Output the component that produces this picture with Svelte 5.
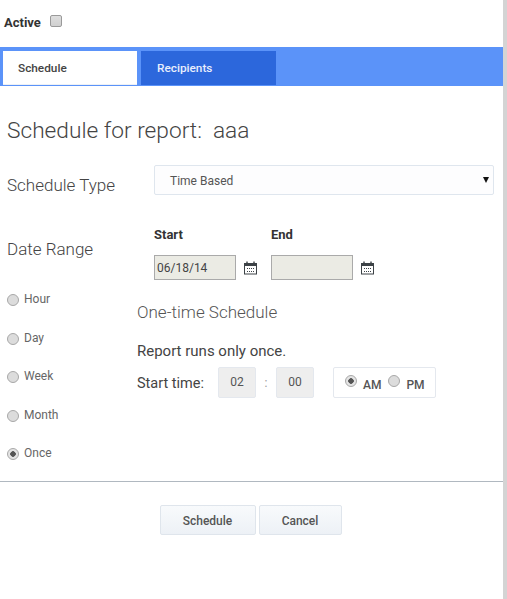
<script>
  let type = $state("Time Based");
  let period = $state("Once");
  let ampm = $state("AM");
  const periods = ["Hour", "Day", "Week", "Month", "Once"];
</script>

<div class="page">
  <div class="active_row">
    <label for="active">Active</label>
    <input id="active" type="checkbox" />
  </div>

  <div class="tabs">
    <div class="tab selected">Schedule</div>
    <div class="tab">Recipients</div>
  </div>

  <h1>Schedule for report:&nbsp; aaa</h1>

  <div class="type_row">
    <span class="field_label">Schedule Type</span>
    <div class="select">
      <span>{type}</span>
      <i class="caret"></i>
    </div>
  </div>

  <div class="date_row">
    <span class="field_label">Date Range</span>
    <div class="dates">
      {#each [["Start", "06/18/14"], ["End", ""]] as [name, value]}
        <div class="date">
          <b>{name}</b>
          <div class="date_input">
            <input type="text" {value} disabled />
            <svg width="15" height="15" viewBox="0 0 15 15">
              <rect x="1.5" y="3.5" width="12" height="10.5" fill="#fff" stroke="#3d4347" />
              <rect x="1" y="3" width="13" height="3" fill="#3d4347" />
              <path d="M4 1.5v2M11 1.5v2" stroke="#3d4347" stroke-width="1.4" />
              <path d="M4 8.5h7M4 11.5h7" stroke="#3d4347" stroke-dasharray="1 1" />
            </svg>
          </div>
        </div>
      {/each}
    </div>
  </div>

  <div class="schedule">
    <div class="periods">
      {#each periods as p}
        <label class="period">
          <input type="radio" name="period" value={p} bind:group={period} />
          <span>{p}</span>
        </label>
      {/each}
    </div>
    <div class="once">
      <h2>One-time Schedule</h2>
      <p>Report runs only once.</p>
      <div class="time_row">
        <span class="start_time">Start time:</span>
        <div class="num">02</div>
        <span class="colon">:</span>
        <div class="num">00</div>
        <div class="ampm">
          <label><input type="radio" name="ampm" value="AM" bind:group={ampm} /><b>AM</b></label>
          <label><input type="radio" name="ampm" value="PM" bind:group={ampm} /><b>PM</b></label>
        </div>
      </div>
    </div>
  </div>

  <div class="actions">
    <button class="wide">Schedule</button>
    <button>Cancel</button>
  </div>
</div>

<style>
  :global(body) {
    background: #fff;
  }

  .page {
    box-sizing: border-box;
    width: 507px;
    height: 599px;
    border-right: 4px solid #d4d4d4;
    font-family: Roboto, "Liberation Sans", sans-serif;
    color: #333;
    overflow: hidden;
  }

  .active_row {
    display: flex;
    align-items: flex-start;
    height: 47px;
    padding-left: 4px;
    box-sizing: border-box;
    padding-top: 15px;
  }

  .active_row label {
    font-size: 13px;
    font-weight: 700;
    line-height: 16px;
  }

  input[type="checkbox"] {
    appearance: none;
    box-sizing: border-box;
    width: 12px;
    height: 12px;
    margin: 0 0 0 9px;
    border: 1px solid #9a9a9a;
    border-radius: 2px;
    background: linear-gradient(#dedede, #d0d0d0);
  }

  .tabs {
    display: flex;
    gap: 4px;
    height: 39px;
    box-sizing: border-box;
    padding: 4px 0 1px 3px;
    background: #5b93f9;
  }

  .tab {
    box-sizing: border-box;
    width: 135px;
    padding-left: 16px;
    font-size: 11.8px;
    font-weight: 500;
    line-height: 35px;
    color: #e8eefc;
    background: #2c67dc;
  }

  .tab.selected {
    width: 134px;
    padding-left: 15px;
    color: #444;
    background: #fff;
    border-bottom: 1px solid #eef1f5;
  }

  h1 {
    margin: 31px 0 0 7px;
    font-size: 22.7px;
    font-weight: 300;
    line-height: 28px;
    color: #444;
  }

  .field_label {
    font-size: 17px;
    font-weight: 300;
    color: #444;
  }

  .type_row {
    display: flex;
    align-items: center;
    margin-top: 20px;
    padding-left: 7px;
  }

  .type_row .field_label {
    width: 147px;
    position: relative;
    top: 5px;
  }

  .select {
    box-sizing: border-box;
    display: flex;
    justify-content: space-between;
    align-items: center;
    width: 340px;
    height: 30px;
    padding: 1px 4px 0 15px;
    border: 1px solid #dfe6ee;
    border-radius: 2px;
    background: #fdfdfe;
    font-size: 12px;
    color: #555;
  }

  .caret {
    width: 0;
    height: 0;
    border: 3.5px solid transparent;
    border-top: 6px solid #111;
    border-bottom: 0;
    margin-top: -2px;
  }

  .date_row {
    display: flex;
    margin-top: 28px;
    padding-left: 7px;
  }

  .date_row .field_label {
    width: 147px;
    padding-top: 16px;
  }

  .dates {
    display: flex;
    gap: 13px;
    padding-top: 4px;
  }

  .date {
    display: flex;
    flex-direction: column;
    gap: 12px;
  }

  .date b {
    font-size: 13px;
    line-height: 16px;
    color: #333;
  }

  .date_input {
    display: flex;
    align-items: center;
    gap: 7px;
  }

  .date_input input {
    box-sizing: border-box;
    width: 82px;
    height: 25px;
    padding: 0 2px;
    border: 1px solid #aaa;
    background: #ebebe4;
    font: 12px Roboto, sans-serif;
    color: #444;
    opacity: 1;
  }

  .schedule {
    display: flex;
    margin-top: 9px;
  }

  .periods {
    display: flex;
    flex-direction: column;
    gap: 20.5px;
    width: 137px;
    padding: 1px 0 0 7px;
    box-sizing: border-box;
  }

  .period {
    display: flex;
    align-items: center;
    gap: 5px;
    height: 18px;
    font-size: 12px;
    color: #666;
  }

  input[type="radio"] {
    appearance: none;
    box-sizing: border-box;
    width: 12px;
    height: 12px;
    margin: 0;
    border: 1px solid #a8a8a8;
    border-radius: 50%;
    background: #dcdcdc;
  }

  input[type="radio"]:checked {
    background: radial-gradient(circle, #555 0 2.5px, #e4e4e4 3px);
  }

  .period input {
    margin-top: 2px;
  }

  h2 {
    margin: 13px 0 0;
    font-size: 17px;
    font-weight: 300;
    line-height: 20px;
    color: #555;
  }

  p {
    margin: 20px 0 0;
    font-size: 15px;
    line-height: 18px;
    color: #444;
  }

  .time_row {
    display: flex;
    align-items: center;
    margin-top: 7px;
    height: 31px;
    font-size: 14.5px;
    color: #444;
  }

  .start_time {
    width: 81px;
    position: relative;
    top: 1px;
  }

  .num {
    box-sizing: border-box;
    width: 38px;
    height: 31px;
    border: 1px solid #e4e8ee;
    border-radius: 2px;
    background: #eee;
    text-align: center;
    font-size: 12px;
    line-height: 29px;
    color: #555;
  }

  .colon {
    width: 20px;
    text-align: center;
    font-size: 12px;
    color: #999;
  }

  .ampm {
    box-sizing: border-box;
    display: flex;
    align-items: center;
    gap: 7px;
    width: 103px;
    height: 31px;
    margin-left: 19px;
    padding-left: 11px;
    border: 1px solid #e4e8ee;
    border-radius: 2px;
  }

  .ampm label {
    display: flex;
    align-items: center;
    gap: 6px;
  }

  .ampm input {
    position: relative;
    top: -2px;
  }

  .ampm b {
    font-size: 12px;
    font-weight: 500;
    color: #555;
    position: relative;
    top: 2px;
  }

  .actions {
    display: flex;
    justify-content: center;
    gap: 3px;
    margin-top: 19px;
    padding: 23px 2px 0 0;
    border-top: 1px solid #b0b8c0;
  }

  button {
    box-sizing: border-box;
    width: 83px;
    height: 30px;
    padding-top: 2px;
    border: 1px solid #dfe5ec;
    border-radius: 2px;
    background: linear-gradient(#f8fafc, #edf1f6);
    font: 500 12px Roboto, sans-serif;
    color: #555;
  }

  button.wide {
    width: 96px;
  }
</style>
